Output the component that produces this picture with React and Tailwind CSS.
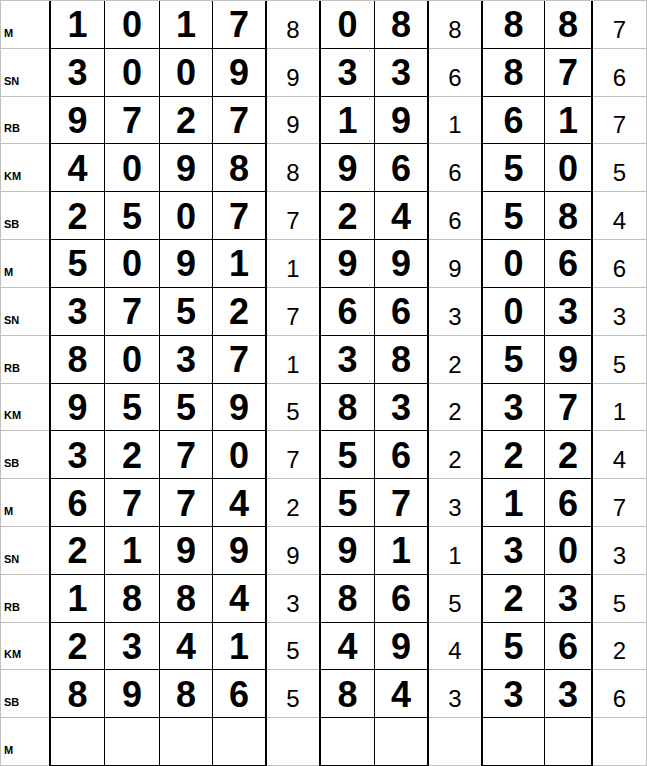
import React from "react";

const labels = ["M", "SN", "RB", "KM", "SB"];
const rows = [
  "1017 8 08 8 88 7",
  "3009 9 33 6 87 6",
  "9727 9 19 1 61 7",
  "4098 8 96 6 50 5",
  "2507 7 24 6 58 4",
  "5091 1 99 9 06 6",
  "3752 7 66 3 03 3",
  "8037 1 38 2 59 5",
  "9559 5 83 2 37 1",
  "3270 7 56 2 22 4",
  "6774 2 57 3 16 7",
  "2199 9 91 1 30 3",
  "1884 3 86 5 23 5",
  "2341 5 49 4 56 2",
  "8986 5 84 3 33 6",
  null,
];

// cell types per column: L label, B big digit, S small digit
const colClasses = [
  "border-b border-[#c0c0c0]", // label
  "border-l-2 border-r border-b border-black", // D1
  "border-r border-b border-black", // D2
  "border-r border-b border-black", // D3
  "border-r-2 border-b border-black", // D4
  "border-b border-[#c0c0c0]", // S1
  "border-l-2 border-r border-b border-black", // D5
  "border-r-2 border-b border-black", // D6
  "border-b border-[#c0c0c0]", // S2
  "border-l-2 border-r border-b border-black", // D7
  "border-r-2 border-b border-black", // D8
  "border-r border-b border-[#c0c0c0]", // S3
];
const kinds = ["L", "B", "B", "B", "B", "S", "B", "B", "S", "B", "B", "S"];

function parse(r) {
  if (!r) return Array(11).fill("");
  const [a, b, c, d, e, f] = r.split(" ");
  return [...a.split(""), b, ...c.split(""), d, ...e.split(""), f];
}

export default function App() {
  return (
    <div
      className="w-[647px] h-[766px] bg-white border-t border-l border-[#c0c0c0] grid grid-cols-[48px_56px_55px_53px_54px_52px_56px_54px_52px_64px_48px_54px] grid-rows-[repeat(16,minmax(0,1fr))]"
      style={{ fontFamily: '"Liberation Sans", Arial, sans-serif' }}
    >
      {rows.map((r, ri) => {
        const vals = parse(r);
        const cells = [labels[ri % 5], ...vals];
        return cells.map((v, ci) => {
          const k = kinds[ci];
          const base = colClasses[ci] + " min-h-0 flex text-black";
          if (k === "L") {
            return (
              <div key={ri + "-" + ci} className={base + " items-end pl-[3px] pb-[9px] text-[11px] font-bold leading-none"}>
                {v}
              </div>
            );
          }
          if (k === "B") {
            return (
              <div key={ri + "-" + ci} className={base + " items-center justify-center pt-[2px] text-[36px] font-bold leading-none"}>
                {v}
              </div>
            );
          }
          return (
            <div key={ri + "-" + ci} className={base + " items-end justify-center pb-[6px] text-[24px] font-normal leading-none"}>
              {v}
            </div>
          );
        });
      })}
    </div>
  );
}
